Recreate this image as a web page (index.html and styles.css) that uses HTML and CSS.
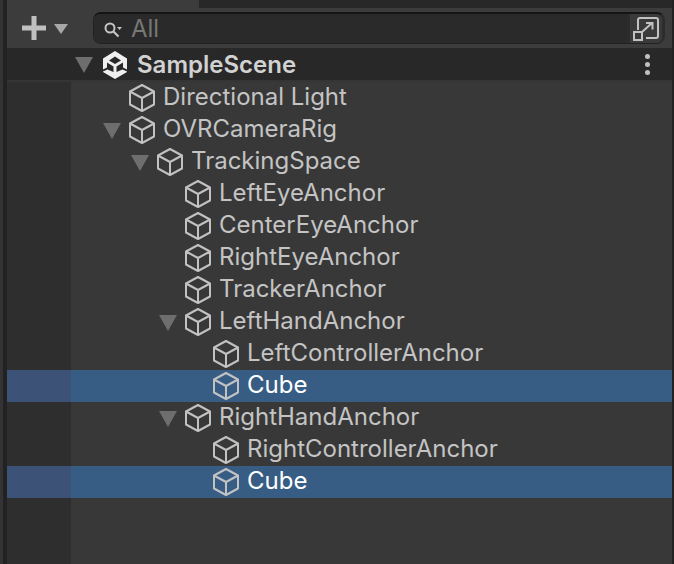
FILE: index.html
```html
<!DOCTYPE html>
<html lang="en">
<head>
    <meta charset="UTF-8">
    <title>Hierarchy</title>
    <link rel="stylesheet" href="styles.css">
</head>
<body>
    <svg class="defs" width="0" height="0">
        <symbol id="cube" viewBox="0 0 28 28">
            <path d="M14 1 L26 7.500 V20.500 L14 27 L2 20.500 V7.500 Z M2 7.500 L14 14 L26 7.500 M14 14 V27" fill="none" stroke="currentColor" stroke-width="2" stroke-linejoin="round"/>
        </symbol>
    </svg>
    <div class="window">
        <div class="tabs"><div class="tab"></div></div>
        <div class="toolbar">
            <div class="add">
                <svg class="plus" width="26" height="26" viewBox="0 0 26 26"><path d="M10.500 1h5v9.500h9.500v5h-9.500v9.500h-5v-9.500h-9.500v-5h9.500z" fill="#c0c0c0"/></svg>
                <span class="arrow arrow-add"></span>
            </div>
            <div class="search">
                <div class="search-field">
                    <svg width="20" height="20" viewBox="0 0 20 20"><circle cx="7" cy="9" r="4.500" fill="none" stroke="#c4c4c4" stroke-width="2"/><path d="M10.500 12.500 L15.500 17.500" stroke="#c4c4c4" stroke-width="2.200"/><path d="M14 8h5l-2.500 3z" fill="#c4c4c4"/></svg>
                    <span class="search-text">All</span>
                </div>
                <div class="search-btn">
                    <svg width="28" height="28" viewBox="0 0 28 28" fill="none" stroke="#c2c2c2" stroke-width="2"><path d="M6 15V5a2 2 0 0 1 2-2h16a2 2 0 0 1 2 2v16a2 2 0 0 1-2 2H14"/><rect x="2" y="17" width="8" height="8"/><path d="M10 17 L20 8 M14 8h6.500v6.500"/></svg>
                </div>
            </div>
        </div>
        <div class="scene">
            <span class="arrow arrow-tree"></span>
            <svg class="unity" width="24" height="28" viewBox="0 0 24 28"><path fill-rule="evenodd" d="M12 0 L24 7.500 V21 L12 28 L0 21 V7.500 Z M12 5.500 L6 9.500 L12 13 L18 9.500 Z M0 18.500 L4 16.500 V11.500 L10.500 15.500 V21 L4.500 18.500 L0 20.500 Z M24 18.500 L20 16.500 V11.500 L13.500 15.500 V21 L19.500 18.500 L24 20.500 Z" fill="#efefef"/></svg>
            <span class="scene-name">SampleScene</span>
            <span class="dots"><i></i><i></i><i></i></span>
        </div>
        <div class="tree">
            <div class="row depth-1 leaf"><svg class="cube"><use href="#cube"/></svg><span>Directional Light</span></div>
            <div class="row depth-1"><span class="arrow arrow-tree"></span><svg class="cube"><use href="#cube"/></svg><span>OVRCameraRig</span></div>
            <div class="row depth-2"><span class="arrow arrow-tree"></span><svg class="cube"><use href="#cube"/></svg><span>TrackingSpace</span></div>
            <div class="row depth-3 leaf"><svg class="cube"><use href="#cube"/></svg><span>LeftEyeAnchor</span></div>
            <div class="row depth-3 leaf"><svg class="cube"><use href="#cube"/></svg><span>CenterEyeAnchor</span></div>
            <div class="row depth-3 leaf"><svg class="cube"><use href="#cube"/></svg><span>RightEyeAnchor</span></div>
            <div class="row depth-3 leaf"><svg class="cube"><use href="#cube"/></svg><span>TrackerAnchor</span></div>
            <div class="row depth-3"><span class="arrow arrow-tree"></span><svg class="cube"><use href="#cube"/></svg><span>LeftHandAnchor</span></div>
            <div class="row depth-4 leaf"><svg class="cube"><use href="#cube"/></svg><span>LeftControllerAnchor</span></div>
            <div class="row depth-4 leaf selected"><svg class="cube"><use href="#cube"/></svg><span>Cube</span></div>
            <div class="row depth-3"><span class="arrow arrow-tree"></span><svg class="cube"><use href="#cube"/></svg><span>RightHandAnchor</span></div>
            <div class="row depth-4 leaf"><svg class="cube"><use href="#cube"/></svg><span>RightControllerAnchor</span></div>
            <div class="row depth-4 leaf selected"><svg class="cube"><use href="#cube"/></svg><span>Cube</span></div>
        </div>
    </div>
</body>
</html>
```
FILE: styles.css
```css
html, body {
    margin: 0;
    padding: 0;
    height: 100%;
    overflow: hidden;
    background: linear-gradient(to right, #333333 3px, #222222 3px);
    font-family: "Inter", "Liberation Sans", sans-serif;
}
.defs {
    display: block;
    height: 0;
}
.window {
    display: flex;
    flex-direction: column;
    height: 564px;
    margin-left: 7px;
    margin-right: 2px;
}
.tabs {
    height: 8px;
    background: #282828;
}
.tab {
    width: 192px;
    height: 8px;
    background: #3c3c3c;
}
.toolbar {
    display: flex;
    align-items: center;
    height: 40px;
    background: #3c3c3c;
    box-sizing: border-box;
    padding: 0 1px 0 14px;
}
.add {
    display: flex;
    align-items: center;
    width: 72px;
    gap: 7px;
}
.arrow {
    display: block;
    flex: none;
    width: 0;
    height: 0;
    border-left: 9px solid transparent;
    border-right: 9px solid transparent;
    border-top: 16px solid #6e6e6e;
}
.arrow-add {
    border-left-width: 7px;
    border-right-width: 7px;
    border-top: 10px solid #a8a8a8;
    margin-top: 1px;
}
.search {
    display: flex;
    flex: 1;
    height: 32px;
    box-sizing: border-box;
    border-radius: 8px;
    overflow: hidden;
    border: 1px solid #212121;
    border-top: 2px solid #151515;
    border-right: 3px solid #2c2c2c;
    margin-right: 6px;
}
.search-field {
    display: flex;
    flex: 1;
    align-items: center;
    gap: 8px;
    padding-left: 9px;
    background: #2a2a2a;
}
.search-text {
    color: #777777;
    font-size: 24px;
}
.search-btn {
    display: flex;
    align-items: center;
    justify-content: center;
    width: 32px;
    background: #3a3a3a;
    border-left: 3px solid #2c2c2c;
}
.scene {
    display: flex;
    align-items: center;
    height: 34px;
    box-sizing: border-box;
    background: #282828;
    border-bottom: 2px solid #353535;
    padding-top: 1px;
    padding-left: 68px;
    color: #d2d2d2;
    font-size: 24px;
    font-weight: 600;
}
.scene .arrow {
    margin-right: 10px;
}
.scene-name {
    margin-left: 10px;
}
.dots {
    display: flex;
    flex-direction: column;
    gap: 3px;
    margin-left: auto;
    margin-right: 22px;
}
.dots i {
    display: block;
    width: 5px;
    height: 5px;
    border-radius: 50%;
    background: #c0c0c0;
}
.tree {
    flex: 1;
    background: linear-gradient(to right, #2e2e2e 64px, #383838 64px);
}
.row {
    display: flex;
    align-items: center;
    height: 32px;
    color: #c4c4c4;
    font-size: 24px;
}
.row > span:last-child {
    margin-top: -4px;
}
.row .arrow {
    margin-top: 2px;
    margin-right: 7px;
}
.row .cube {
    width: 28px;
    height: 28px;
    margin-right: 7px;
    color: #c2c2c2;
}
.depth-1 { padding-left: 96px; }
.depth-2 { padding-left: 124px; }
.depth-3 { padding-left: 152px; }
.depth-4 { padding-left: 180px; }
.leaf.depth-1 { padding-left: 121px; }
.leaf.depth-3 { padding-left: 177px; }
.leaf.depth-4 { padding-left: 205px; }
.selected {
    color: #ffffff;
    background: linear-gradient(to right, #3d5277 64px, #375d85 64px);
}
```
